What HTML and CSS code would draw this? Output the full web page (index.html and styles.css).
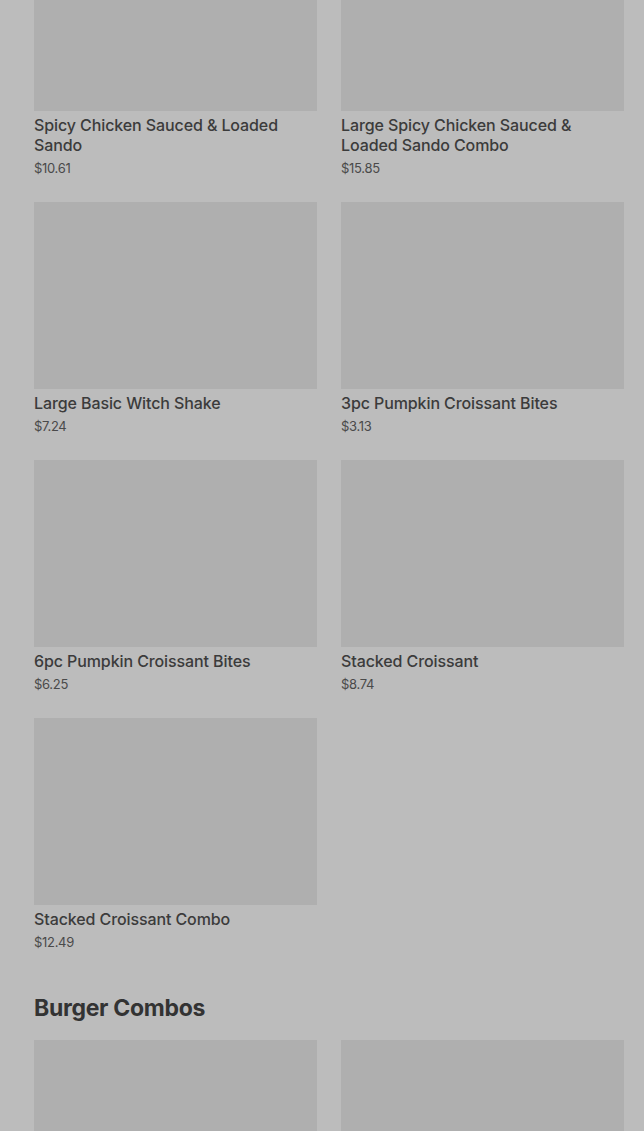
FILE: index.html
```html
<!DOCTYPE html>
<html lang="en">
<head>
    <meta charset="UTF-8">
    <meta name="viewport" content="width=device-width, initial-scale=1.0">
    <title>Menu</title>
    <link rel="stylesheet" href="styles.css">
</head>
<body>
    <div class="page">
        <section class="menu-section first">
            <ul class="item-grid">
                <li class="item">
                    <div class="item-image"></div>
                    <div class="item-title">Spicy Chicken Sauced &amp; Loaded Sando</div>
                    <div class="item-price">$10.61</div>
                </li>
                <li class="item">
                    <div class="item-image"></div>
                    <div class="item-title">Large Spicy Chicken Sauced &amp; Loaded Sando Combo</div>
                    <div class="item-price">$15.85</div>
                </li>
                <li class="item">
                    <div class="item-image"></div>
                    <div class="item-title">Large Basic Witch Shake</div>
                    <div class="item-price">$7.24</div>
                </li>
                <li class="item">
                    <div class="item-image"></div>
                    <div class="item-title">3pc Pumpkin Croissant Bites</div>
                    <div class="item-price">$3.13</div>
                </li>
                <li class="item">
                    <div class="item-image"></div>
                    <div class="item-title">6pc Pumpkin Croissant Bites</div>
                    <div class="item-price">$6.25</div>
                </li>
                <li class="item">
                    <div class="item-image"></div>
                    <div class="item-title">Stacked Croissant</div>
                    <div class="item-price">$8.74</div>
                </li>
                <li class="item">
                    <div class="item-image"></div>
                    <div class="item-title">Stacked Croissant Combo</div>
                    <div class="item-price">$12.49</div>
                </li>
            </ul>
        </section>

        <section class="menu-section">
            <h2 class="section-title">Burger Combos</h2>
            <ul class="item-grid">
                <li class="item">
                    <div class="item-image"></div>
                </li>
                <li class="item">
                    <div class="item-image"></div>
                </li>
            </ul>
        </section>
    </div>
</body>
</html>
```

FILE: styles.css
```css
body {
    margin: 0;
    background-color: #bcbcbc;
    font-family: Inter, "Noto Sans", Arial, sans-serif;
    color: #3a3a3a;
}

.page {
    padding: 0 20px 0 34px;
}

.menu-section.first {
    margin-top: -76px;
}

.section-title {
    margin: 16px 0 16px;
    font-size: 23px;
    line-height: 32px;
    font-weight: 700;
    letter-spacing: -0.3px;
    color: #333;
}

.item-grid {
    list-style-type: none;
    margin: 0;
    padding: 0;
    display: grid;
    grid-template-columns: 1fr 1fr;
    column-gap: 24px;
}

.item {
    padding-bottom: 24px;
}

.item-image {
    height: 187px;
    background-color: #afafaf;
    margin-bottom: 4px;
}

.item-title {
    font-size: 16px;
    line-height: 20px;
    font-weight: 500;
    letter-spacing: -0.1px;
    color: #3b3b3b;
}

.item-price {
    margin-top: 3px;
    font-size: 13px;
    line-height: 20px;
    color: #4a4a4a;
    letter-spacing: -0.3px;
}
```
